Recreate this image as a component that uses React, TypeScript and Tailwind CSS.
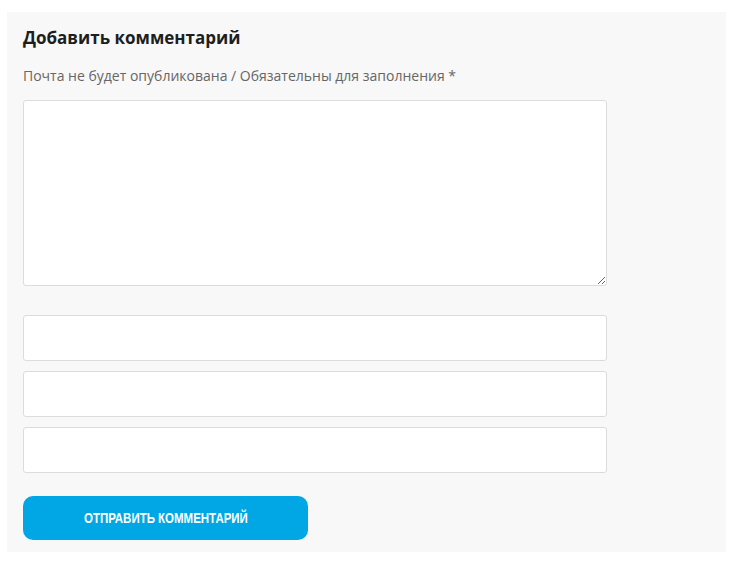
export default function App() {
  const fields = ['author', 'email', 'url'];

  return (
    <div className="min-h-[571px] bg-white pt-3 pl-[7px] pr-[10px]">
      <form
        className="bg-[#f8f8f8] px-4 pt-[13px] pb-3"
        style={{ fontFamily: '"Open Sans", "Noto Sans", sans-serif' }}
        onSubmit={(e) => e.preventDefault()}
      >
        <h3 className="text-[17px] font-bold leading-[26px] text-[#1e1e1e]">
          Добавить комментарий
        </h3>
        <p className="mt-[14px] text-[14px] leading-[22px] text-[#666]">
          Почта не будет опубликована / Обязательны для заполнения *
        </p>

        <textarea
          className="mt-[13px] block h-[186px] w-[584px] rounded-[3px] border border-[#dcdcdc] bg-white outline-none"
          aria-label="Комментарий"
        />

        <div className="mt-[29px] flex flex-col gap-[10px]">
          {fields.map((f) => (
            <input
              key={f}
              name={f}
              type="text"
              className="block h-[46px] w-[584px] rounded-[3px] border border-[#dcdcdc] bg-white outline-none"
            />
          ))}
        </div>

        <button
          type="submit"
          className="mt-[23px] flex h-[44px] w-[285px] items-center justify-center rounded-[10px] bg-[#00a7e4] text-white"
        >
          {/* narrow caps label, squeezed horizontally */}
          <span
            className="inline-block scale-x-[0.82] whitespace-nowrap text-[14px] font-bold uppercase"
            style={{ fontFamily: '"Liberation Sans", Arial, sans-serif' }}
          >
            Отправить комментарий
          </span>
        </button>
      </form>
    </div>
  );
}
